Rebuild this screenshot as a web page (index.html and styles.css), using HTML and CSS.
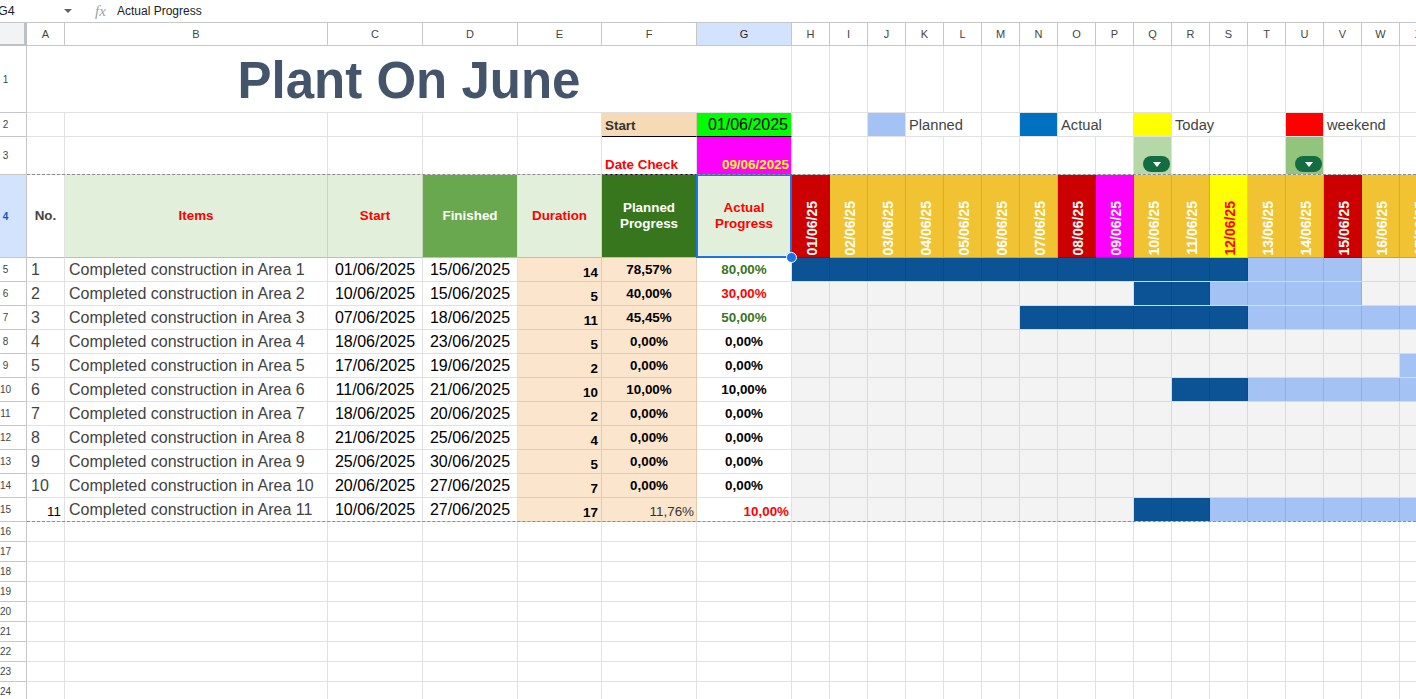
FILE: index.html
```html
<!DOCTYPE html>
<html lang="en">
<head>
<meta charset="utf-8">
<title>Plant On June</title>
<link rel="stylesheet" href="styles.css">
</head>
<body>
<div class="namebar">
  <div class="ref">G4</div>
  <svg class="caret" width="8" height="4" viewBox="0 0 8 4"><path d="M0 0h8L4 4z" fill="#5f6368"/></svg>
  <span class="fx">fx</span>
  <span class="formula">Actual Progress</span>
</div>

<div class="sheet">
  <div class="row colhead">
    <div class="corner"></div>
    <div class="ch ca">A</div><div class="ch cb">B</div><div class="ch cc">C</div><div class="ch cd">D</div><div class="ch ce">E</div><div class="ch cf">F</div><div class="ch cg on">G</div>
    <div class="ch d">H</div><div class="ch d">I</div><div class="ch d">J</div><div class="ch d">K</div><div class="ch d">L</div><div class="ch d">M</div><div class="ch d">N</div><div class="ch d">O</div><div class="ch d">P</div><div class="ch d">Q</div><div class="ch d">R</div><div class="ch d">S</div><div class="ch d">T</div><div class="ch d">U</div><div class="ch d">V</div><div class="ch d">W</div><div class="ch d">X</div>
  </div>

  <!-- row 1 -->
  <div class="row h1">
    <div class="rh"><span>1</span></div>
    <div class="c title">Plant On June</div>
    <div class="blank"></div>
  </div>

  <!-- row 2 -->
  <div class="row h2">
    <div class="rh"><span>2</span></div>
    <div class="c ca"></div><div class="c cb"></div><div class="c cc"></div><div class="c cd"></div><div class="c ce"></div>
    <div class="c cf startlbl">Start</div>
    <div class="c cg startval">01/06/2025</div>
    <div class="c d"></div><div class="c d"></div>
    <div class="c d plan-c"></div>
    <div class="c lgt">Planned</div>
    <div class="c d"></div>
    <div class="c d act-c"></div>
    <div class="c lgt">Actual</div>
    <div class="c d today-c"></div>
    <div class="c lgt">Today</div>
    <div class="c d"></div>
    <div class="c d wk-c"></div>
    <div class="c lgt">weekend</div>
    <div class="c d"></div>
  </div>

  <!-- row 3 -->
  <div class="row h3">
    <div class="rh"><span>3</span></div>
    <div class="c ca"></div><div class="c cb"></div><div class="c cc"></div><div class="c cd"></div><div class="c ce"></div>
    <div class="c cf checklbl">Date Check</div>
    <div class="c cg checkval">09/06/2025</div>
    <div class="c d"></div><div class="c d"></div><div class="c d"></div><div class="c d"></div><div class="c d"></div><div class="c d"></div><div class="c d"></div><div class="c d"></div><div class="c d"></div>
    <div class="c d ddcell g1"><span class="chip"><svg width="8" height="5" viewBox="0 0 8 5"><path d="M0 0h8L4 5z" fill="#fff"/></svg></span></div>
    <div class="c d"></div><div class="c d"></div><div class="c d"></div>
    <div class="c d ddcell g2"><span class="chip"><svg width="8" height="5" viewBox="0 0 8 5"><path d="M0 0h8L4 5z" fill="#fff"/></svg></span></div>
    <div class="c d"></div><div class="c d"></div><div class="c d"></div>
  </div>

  <!-- row 4 -->
  <div class="row h4">
    <div class="rh on"><span>4</span></div>
    <div class="c ca hdr nohdr">No.</div>
    <div class="c cb hdr lgreen red">Items</div>
    <div class="c cc hdr lgreen red">Start</div>
    <div class="c cd hdr mgreen white">Finished</div>
    <div class="c ce hdr lgreen red">Duration</div>
    <div class="c cf hdr dgreen white">Planned<br>Progress</div>
    <div class="c cg hdr lgreen red selected">Actual<br>Progress</div>
    <div class="gh wk"><span>01/06/25</span></div>
    <div class="gh"><span>02/06/25</span></div>
    <div class="gh"><span>03/06/25</span></div>
    <div class="gh"><span>04/06/25</span></div>
    <div class="gh"><span>05/06/25</span></div>
    <div class="gh"><span>06/06/25</span></div>
    <div class="gh"><span>07/06/25</span></div>
    <div class="gh wk"><span>08/06/25</span></div>
    <div class="gh chk"><span>09/06/25</span></div>
    <div class="gh"><span>10/06/25</span></div>
    <div class="gh"><span>11/06/25</span></div>
    <div class="gh today"><span>12/06/25</span></div>
    <div class="gh"><span>13/06/25</span></div>
    <div class="gh"><span>14/06/25</span></div>
    <div class="gh wk"><span>15/06/25</span></div>
    <div class="gh"><span>16/06/25</span></div>
    <div class="gh"><span>17/06/25</span></div>
  </div>

  <!-- data rows -->
  <div class="row hd">
    <div class="rh"><span>5</span></div>
    <div class="c ca ta">1</div><div class="c cb tb">Completed construction in Area 1</div>
    <div class="c cc tc">01/06/2025</div><div class="c cd tc">15/06/2025</div>
    <div class="c ce te">14</div><div class="c cf tf">78,57%</div><div class="c cg tg good">80,00%</div>
    <div class="gantt"><span class="bar act" style="--n:12"></span><span class="bar plan" style="--n:3"></span></div>
  </div>
  <div class="row hd">
    <div class="rh"><span>6</span></div>
    <div class="c ca ta">2</div><div class="c cb tb">Completed construction in Area 2</div>
    <div class="c cc tc">10/06/2025</div><div class="c cd tc">15/06/2025</div>
    <div class="c ce te">5</div><div class="c cf tf">40,00%</div><div class="c cg tg bad">30,00%</div>
    <div class="gantt"><span class="gap" style="--n:9"></span><span class="bar act" style="--n:2"></span><span class="bar plan" style="--n:4"></span></div>
  </div>
  <div class="row hd">
    <div class="rh"><span>7</span></div>
    <div class="c ca ta">3</div><div class="c cb tb">Completed construction in Area 3</div>
    <div class="c cc tc">07/06/2025</div><div class="c cd tc">18/06/2025</div>
    <div class="c ce te">11</div><div class="c cf tf">45,45%</div><div class="c cg tg good">50,00%</div>
    <div class="gantt"><span class="gap" style="--n:6"></span><span class="bar act" style="--n:6"></span><span class="bar plan" style="--n:5"></span></div>
  </div>
  <div class="row hd">
    <div class="rh"><span>8</span></div>
    <div class="c ca ta">4</div><div class="c cb tb">Completed construction in Area 4</div>
    <div class="c cc tc">18/06/2025</div><div class="c cd tc">23/06/2025</div>
    <div class="c ce te">5</div><div class="c cf tf">0,00%</div><div class="c cg tg">0,00%</div>
    <div class="gantt"></div>
  </div>
  <div class="row hd">
    <div class="rh"><span>9</span></div>
    <div class="c ca ta">5</div><div class="c cb tb">Completed construction in Area 5</div>
    <div class="c cc tc">17/06/2025</div><div class="c cd tc">19/06/2025</div>
    <div class="c ce te">2</div><div class="c cf tf">0,00%</div><div class="c cg tg">0,00%</div>
    <div class="gantt"><span class="gap" style="--n:16"></span><span class="bar plan" style="--n:1"></span></div>
  </div>
  <div class="row hd">
    <div class="rh"><span>10</span></div>
    <div class="c ca ta">6</div><div class="c cb tb">Completed construction in Area 6</div>
    <div class="c cc tc">11/06/2025</div><div class="c cd tc">21/06/2025</div>
    <div class="c ce te">10</div><div class="c cf tf">10,00%</div><div class="c cg tg">10,00%</div>
    <div class="gantt"><span class="gap" style="--n:10"></span><span class="bar act" style="--n:2"></span><span class="bar plan" style="--n:5"></span></div>
  </div>
  <div class="row hd">
    <div class="rh"><span>11</span></div>
    <div class="c ca ta">7</div><div class="c cb tb">Completed construction in Area 7</div>
    <div class="c cc tc">18/06/2025</div><div class="c cd tc">20/06/2025</div>
    <div class="c ce te">2</div><div class="c cf tf">0,00%</div><div class="c cg tg">0,00%</div>
    <div class="gantt"></div>
  </div>
  <div class="row hd">
    <div class="rh"><span>12</span></div>
    <div class="c ca ta">8</div><div class="c cb tb">Completed construction in Area 8</div>
    <div class="c cc tc">21/06/2025</div><div class="c cd tc">25/06/2025</div>
    <div class="c ce te">4</div><div class="c cf tf">0,00%</div><div class="c cg tg">0,00%</div>
    <div class="gantt"></div>
  </div>
  <div class="row hd">
    <div class="rh"><span>13</span></div>
    <div class="c ca ta">9</div><div class="c cb tb">Completed construction in Area 9</div>
    <div class="c cc tc">25/06/2025</div><div class="c cd tc">30/06/2025</div>
    <div class="c ce te">5</div><div class="c cf tf">0,00%</div><div class="c cg tg">0,00%</div>
    <div class="gantt"></div>
  </div>
  <div class="row hd">
    <div class="rh"><span>14</span></div>
    <div class="c ca ta">10</div><div class="c cb tb">Completed construction in Area 10</div>
    <div class="c cc tc">20/06/2025</div><div class="c cd tc">27/06/2025</div>
    <div class="c ce te">7</div><div class="c cf tf">0,00%</div><div class="c cg tg">0,00%</div>
    <div class="gantt"></div>
  </div>
  <div class="row hd">
    <div class="rh"><span>15</span></div>
    <div class="c ca ta last">11</div><div class="c cb tb">Completed construction in Area 11</div>
    <div class="c cc tc">10/06/2025</div><div class="c cd tc">27/06/2025</div>
    <div class="c ce te">17</div><div class="c cf tf last">11,76%</div><div class="c cg tg last bad">10,00%</div>
    <div class="gantt"><span class="gap" style="--n:9"></span><span class="bar act" style="--n:2"></span><span class="bar plan" style="--n:6"></span></div>
  </div>

  <!-- empty rows 16-24 -->
  <div class="row empty">
    <div class="rhcol">
      <div><span>16</span></div><div><span>17</span></div><div><span>18</span></div><div><span>19</span></div><div><span>20</span></div><div><span>21</span></div><div><span>22</span></div><div><span>23</span></div><div><span>24</span></div>
    </div>
    <div class="ec ca"></div><div class="ec cb"></div><div class="ec cc"></div><div class="ec cd"></div><div class="ec ce"></div><div class="ec cf"></div><div class="ec cg"></div>
    <div class="eg"></div>
  </div>

  <div class="marquee"></div>
</div>
</body>
</html>
```

FILE: styles.css
```css
* { box-sizing: border-box; margin: 0; padding: 0; }
html, body { width: 1416px; height: 699px; overflow: hidden; background: #fff; }
body { font-family: "Liberation Sans", Arial, Helvetica, sans-serif; color: #000; }

/* formula bar */
.namebar { height: 23px; display: flex; align-items: center; border-bottom: 1px solid #c7c7c7; font-size: 12px; color: #202124; }
.ref { width: 66px; margin-left: -2px; font-size: 12.5px; }
.caret { margin-right: 23px; flex: none; }
.fx { width: 22px; font-family: "Liberation Serif", "DejaVu Serif", serif; font-style: italic; font-size: 15px; color: #9aa0a6; }
.formula { font-size: 12px; }

/* sheet grid */
.sheet { position: relative; }
.row { display: flex; }
.colhead { height: 23px; }
.h1 { height: 67px; }
.h2 { height: 24px; }
.h3 { height: 38px; }
.h4 { height: 83px; }
.hd { height: 24px; }
.empty { height: 180px; }

.corner { flex: none; width: 27px; background: #f1f3f4; border-right: 3px solid #bdc1c6; border-bottom: 2px solid #bdc1c6; }
.ch { flex: none; display: flex; align-items: center; justify-content: center; font-size: 11px; color: #444; border-right: 1px solid #c7c7c7; border-bottom: 1px solid #c7c7c7; }
.ch.on { background: #d3e3fd; color: #1f1f1f; }

.rh { flex: none; width: 27px; display: flex; align-items: center; font-size: 10px; color: #444; border-right: 1px solid #c7c7c7; border-bottom: 1px solid #c7c7c7; }
.rh span, .rhcol span { width: 11px; text-align: center; }
.rh.on { background: #d3e3fd; color: #0b57d0; font-weight: bold; }

.c { flex: none; display: flex; align-items: center; white-space: nowrap; overflow: hidden; border-right: 1px solid #e1e1e1; border-bottom: 1px solid #e1e1e1; }
.ca { width: 38px; }
.cb { width: 263px; }
.cc, .cd, .cf, .cg { width: 95px; }
.ce { width: 84px; }
.d { width: 38px; }

/* row 1 */
.title { width: 765px; justify-content: center; font-weight: bold; font-size: 51px; color: #44546a; padding-top: 2px; }
.blank { flex: 1; border-bottom: 1px solid #e1e1e1; background: repeating-linear-gradient(to right, #fff 0 37px, #e1e1e1 37px 38px); }

/* row 2 / 3 */
.startlbl { background: #f6dab5; font-weight: bold; font-size: 13.4px; color: #333; padding-left: 3px; align-items: flex-end; padding-bottom: 3px; border-bottom-color: #000; border-right-color: #d9c3a3; }
.startval { background: #00ff00; font-size: 16px; justify-content: flex-end; padding-right: 3px; border-bottom-color: #000; }
.checklbl { font-weight: bold; font-size: 13.4px; color: #ff0000; padding-left: 3px; align-items: flex-end; padding-bottom: 2px; border-bottom-color: #000; }
.checkval { background: #ff00ff; font-weight: bold; font-size: 13.4px; color: #ffff00; justify-content: flex-end; align-items: flex-end; padding: 0 2px 2px 0; border-bottom-color: #000; }

.lgt { width: 76px; padding-left: 3px; font-size: 14.7px; color: #434343; }
.plan-c { background: #a4c2f4; }
.act-c { background: #0070c0; }
.today-c { background: #ffff00; }
.wk-c { background: #ff0000; }

.ddcell { align-items: flex-end; padding: 0 0 2px 9px; }
.g1 { background: #b6d7a8; }
.g2 { background: #93c47d; }
.chip { width: 27px; height: 16px; border-radius: 8px; background: #146c43; display: flex; align-items: center; justify-content: center; }

/* row 4 headers */
.hdr { justify-content: center; text-align: center; font-weight: bold; font-size: 13.4px; line-height: 16px; }
.nohdr { color: #434343; }
.lgreen { background: #e2efda; border-right-color: #c9d6c0; }
.mgreen { background: #6aa84f; }
.dgreen { background: #38761d; }
.red { color: #ff0000; }
.white { color: #fff; }
.h4 .c { border-bottom-color: #a9bfe3; }
.selected { position: relative; overflow: visible; }
.selected::after { content: ""; position: absolute; left: -1px; top: -1px; right: -1px; bottom: -1px; border: 2px solid #1a73e8; pointer-events: none; }
.selected::before { content: ""; position: absolute; right: -6px; bottom: -6px; width: 9px; height: 9px; border-radius: 50%; background: #1a73e8; border: 1px solid #fff; z-index: 2; }

.gh { flex: none; width: 38px; display: flex; justify-content: center; align-items: flex-end; padding: 0 0 2px 2px; background: #f1c232; border-right: 1px solid rgba(0,0,0,0.11); border-bottom: 1px solid rgba(0,0,0,0.15); }
.gh span { writing-mode: vertical-rl; transform: rotate(180deg); font-weight: bold; font-size: 14px; line-height: 14px; color: #fff; }
.gh.wk { background: #cc0000; }
.gh.chk { background: #ff00ff; }
.gh.today { background: #ffff00; }
.gh.today span { color: #ff0000; }

/* data */
.ta { padding-left: 4px; font-size: 16px; color: #434343; }
.tb { padding-left: 4px; font-size: 16px; color: #434343; }
.tc { justify-content: center; font-size: 16px; }
.te { background: #fce5cd; justify-content: flex-end; align-items: flex-end; padding: 0 3px 1px 0; font-weight: bold; font-size: 13.4px; border-color: #e3cbb0; }
.tf { background: #fce5cd; justify-content: center; font-weight: bold; font-size: 13.4px; border-color: #e3cbb0; }
.tg { justify-content: center; font-weight: bold; font-size: 13.4px; }
.good { color: #38761d; }
.bad { color: #ff0000; }
.ta.last { justify-content: flex-end; align-items: flex-end; padding: 0 3px 2px 0; font-size: 13.4px; color: #000; }
.tf.last { justify-content: flex-end; align-items: flex-end; padding: 0 2px 2px 0; font-weight: normal; color: #333; }
.tg.last { justify-content: flex-end; align-items: flex-end; padding: 0 2px 2px 0; }

/* gantt bars */
.gantt { flex: 1; display: flex; border-bottom: 1px solid #dadada; background: repeating-linear-gradient(to right, #f3f3f3 0 37px, #dadada 37px 38px); overflow: hidden; }
.bar, .gap { flex: none; width: calc(var(--n) * 38px); }
.act { background: repeating-linear-gradient(to right, #0b5394 0 37px, #0a4a86 37px 38px); }
.plan { background: repeating-linear-gradient(to right, #a4c2f4 0 37px, #8fb0e6 37px 38px); }

/* empty rows */
.rhcol { flex: none; width: 27px; border-right: 1px solid #c7c7c7; }
.rhcol div { height: 20px; display: flex; align-items: center; font-size: 10px; color: #444; border-bottom: 1px solid #c7c7c7; }
.ec { flex: none; border-right: 1px solid #e1e1e1; background: repeating-linear-gradient(to bottom, #fff 0 19px, #e1e1e1 19px 20px); }
.eg { flex: 1; background: repeating-linear-gradient(to right, transparent 0 37px, #e1e1e1 37px 38px), repeating-linear-gradient(to bottom, #fff 0 19px, #e1e1e1 19px 20px); }

/* copy marquee overlay */
.marquee { position: absolute; left: 27px; right: 0; top: 151px; height: 348px; border-top: 1px dashed #8c8c8c; border-bottom: 1px dashed #8c8c8c; pointer-events: none; }
```
